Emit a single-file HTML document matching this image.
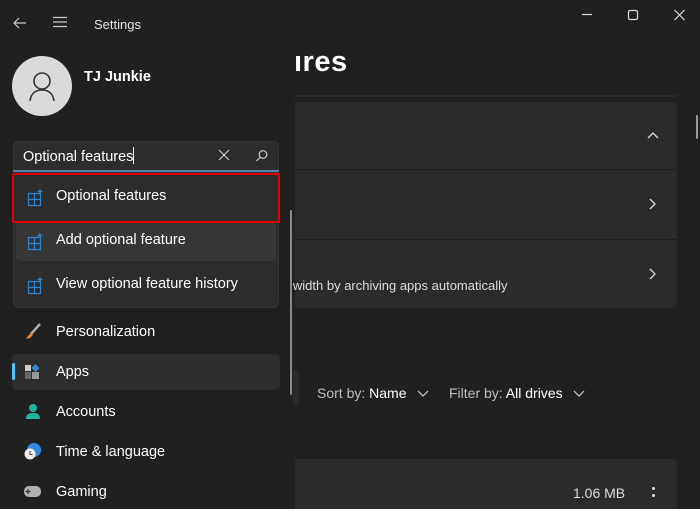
<!DOCTYPE html>
<html><head><style>
*{margin:0;padding:0;box-sizing:border-box}
body{width:700px;height:500px;background:#202020;overflow:hidden;position:relative;font-family:"Liberation Sans",sans-serif;color:#fff}
.a{position:absolute}
.t{font-size:14.5px;white-space:nowrap}
</style></head><body>
<svg class="a" style="left:12px;top:16px" width="16" height="14"><path d="M14 7H2M7 2L2 7l5 5" stroke="#ccc" stroke-width="1.2" fill="none"/></svg>
<svg class="a" style="left:52px;top:16px" width="16" height="12"><path d="M1 1.5h14M1 6h14M1 10.5h14" stroke="#ccc" stroke-width="1.2"/></svg>
<div class="a" style="left:94px;top:17px;font-size:13px;color:#e6e6e6">Settings</div>
<svg class="a" style="left:570px;top:8px" width="124" height="20"><path d="M12 6.5h10" stroke="#ddd" stroke-width="1.2"/><rect x="58.5" y="2.5" width="9" height="9" rx="1.5" stroke="#ddd" stroke-width="1.2" fill="none"/><path d="M104.5 2l10 10M114.5 2l-10 10" stroke="#ddd" stroke-width="1.2"/></svg>
<div class="a" style="left:12px;top:56px;width:60px;height:60px;border-radius:50%;background:#dadada"></div>
<svg class="a" style="left:12px;top:56px" width="60" height="60"><circle cx="30" cy="25" r="8" stroke="#333" stroke-width="1.6" fill="none"/><path d="M18 45c1-8 6-11 12-11s11 3 12 11" stroke="#333" stroke-width="1.6" fill="none"/></svg>
<div class="a" style="left:84px;top:69px;font-size:14.5px;font-weight:bold">TJ Junkie</div>
<div class="a" style="left:294px;top:46px;font-size:29px;font-weight:bold;letter-spacing:.5px">ıres</div>
<div class="a" style="left:295px;top:95px;width:382px;height:2px;background:#2a2a2a"></div>
<div class="a" style="left:295px;top:102px;width:382px;height:206px;background:#2b2b2b;border-radius:0 5px 5px 0"></div>
<div class="a" style="left:295px;top:169px;width:382px;height:1px;background:#1d1d1d"></div>
<div class="a" style="left:295px;top:239px;width:382px;height:1px;background:#1d1d1d"></div>
<svg class="a" style="left:645px;top:128px" width="16" height="160"><path d="M3 10l5-5 5 5" stroke="#ddd" stroke-width="1.3" fill="none"/><path d="M5 71l5 5-5 5M5 141l5 5-5 5" stroke="#ddd" stroke-width="1.3" fill="none"/></svg>
<div class="a t" style="left:290px;top:278px;font-size:13px;color:#ddd">lwidth by archiving apps automatically</div>
<div class="a" style="left:696px;top:115px;width:2px;height:24px;background:#999;border-radius:1px"></div>
<div class="a" style="left:293px;top:370px;width:6px;height:35px;background:#2a2a2a;border-radius:0 3px 3px 0"></div>
<div class="a t" style="left:317px;top:385px;font-size:14px;color:#bdbdbd">Sort by: <span style="color:#fff">Name</span></div>
<div class="a t" style="left:449px;top:385px;font-size:14px;color:#bdbdbd">Filter by: <span style="color:#fff">All drives</span></div>
<svg class="a" style="left:416px;top:388px" width="180" height="12"><path d="M2 3l5 5 5-5M158 3l5 5 5-5" stroke="#ccc" stroke-width="1.2" fill="none"/></svg>
<div class="a" style="left:295px;top:459px;width:382px;height:50px;background:#2b2b2b;border-radius:0 5px 0 0"></div>
<div class="a t" style="left:573px;top:485px;font-size:14px;color:#ddd">1.06 MB</div>
<div class="a" style="left:652px;top:487px;width:3px;height:3px;background:#ddd;border-radius:50%"></div>
<div class="a" style="left:652px;top:494px;width:3px;height:3px;background:#ddd;border-radius:50%"></div>
<div class="a" style="left:290px;top:210px;width:2px;height:185px;background:#8a8a8a;border-radius:1px"></div>
<div class="a" style="left:13px;top:141px;width:266px;height:167px;background:#2c2c2c;border-radius:6px;border:1px solid #353535"></div>
<div class="a t" style="left:23px;top:147px;font-size:14.5px">Optional features<span style="display:inline-block;width:1px;height:17px;background:#fff;vertical-align:-3px"></span></div>
<svg class="a" style="left:218px;top:149px" width="52" height="14"><path d="M1 1l10 10M11 1L1 11" stroke="#ccc" stroke-width="1.2"/><circle cx="45" cy="5.5" r="3.8" stroke="#ccc" stroke-width="1.2" fill="none"/><path d="M42.3 8.2L38.5 12" stroke="#ccc" stroke-width="1.2"/></svg>
<div class="a" style="left:13px;top:170px;width:266px;height:2px;background:#5a7fb0"></div>
<div class="a" style="left:16px;top:223px;width:260px;height:38px;background:#363636;border-radius:4px"></div>
<div class="a" style="left:12px;top:173px;width:268px;height:50px;border:2.5px solid #e00000;border-radius:2px"></div>
<svg class="a" style="left:27px;top:188px" width="18" height="110"><g stroke="#2f86d6" stroke-width="1.2" fill="none"><path d="M1.5 5.5h6v6h-6zM7.5 5.5h6v6h-6zM1.5 11.5h6v6h-6zM7.5 11.5h6v6h-6zM13 1v5M10.5 3.5h5"/></g><g stroke="#2f86d6" stroke-width="1.2" fill="none" transform="translate(0,44)"><path d="M1.5 5.5h6v6h-6zM7.5 5.5h6v6h-6zM1.5 11.5h6v6h-6zM7.5 11.5h6v6h-6zM13 1v5M10.5 3.5h5"/></g><g stroke="#2f86d6" stroke-width="1.2" fill="none" transform="translate(0,88)"><path d="M1.5 5.5h6v6h-6zM7.5 5.5h6v6h-6zM1.5 11.5h6v6h-6zM7.5 11.5h6v6h-6zM13 1v5M10.5 3.5h5"/></g></svg>
<div class="a t" style="left:56px;top:188px">Optional features</div>
<div class="a t" style="left:56px;top:232px">Add optional feature</div>
<div class="a t" style="left:56px;top:276px">View optional feature history</div>
<div class="a" style="left:12px;top:354px;width:268px;height:36px;background:#2d2d2d;border-radius:4px"></div>
<div class="a" style="left:12px;top:363px;width:3px;height:17px;background:#4cc2ff;border-radius:2px"></div>
<svg class="a" style="left:24px;top:322px" width="18" height="18"><path d="M16 2L7 12" stroke="#aaa" stroke-width="2.5"/><path d="M7 11l-3 3-2 3 4-1 3-3z" fill="#f08a24"/></svg>
<svg class="a" style="left:25px;top:364px" width="16" height="16"><rect x="0" y="1" width="6" height="6" fill="#ccc"/><rect x="0" y="8" width="6" height="7" fill="#666"/><rect x="7" y="8" width="7" height="7" fill="#999"/><path d="M10.5 0l4 4-4 4-4-4z" fill="#2e8be0"/></svg>
<svg class="a" style="left:24px;top:403px" width="18" height="18"><circle cx="9" cy="5" r="4" fill="#1fb3a1"/><path d="M2 16c0-5 3-6 7-6s7 1 7 6z" fill="#1fb3a1"/></svg>
<svg class="a" style="left:23px;top:442px" width="20" height="20"><circle cx="11" cy="8" r="7" fill="#2e8be0"/><circle cx="7" cy="12" r="5.5" fill="#eee"/><path d="M7 9v3.5h2.5" stroke="#444" stroke-width="1" fill="none"/></svg>
<svg class="a" style="left:23px;top:484px" width="20" height="16"><rect x="1" y="2" width="17" height="11" rx="5" fill="#b0b0b0"/><path d="M5 5v5M2.5 7.5h5" stroke="#333" stroke-width="1.2"/></svg>
<div class="a t" style="left:56px;top:324px">Personalization</div>
<div class="a t" style="left:56px;top:364px">Apps</div>
<div class="a t" style="left:56px;top:404px">Accounts</div>
<div class="a t" style="left:56px;top:444px">Time &amp; language</div>
<div class="a t" style="left:56px;top:484px">Gaming</div>
</body></html>
